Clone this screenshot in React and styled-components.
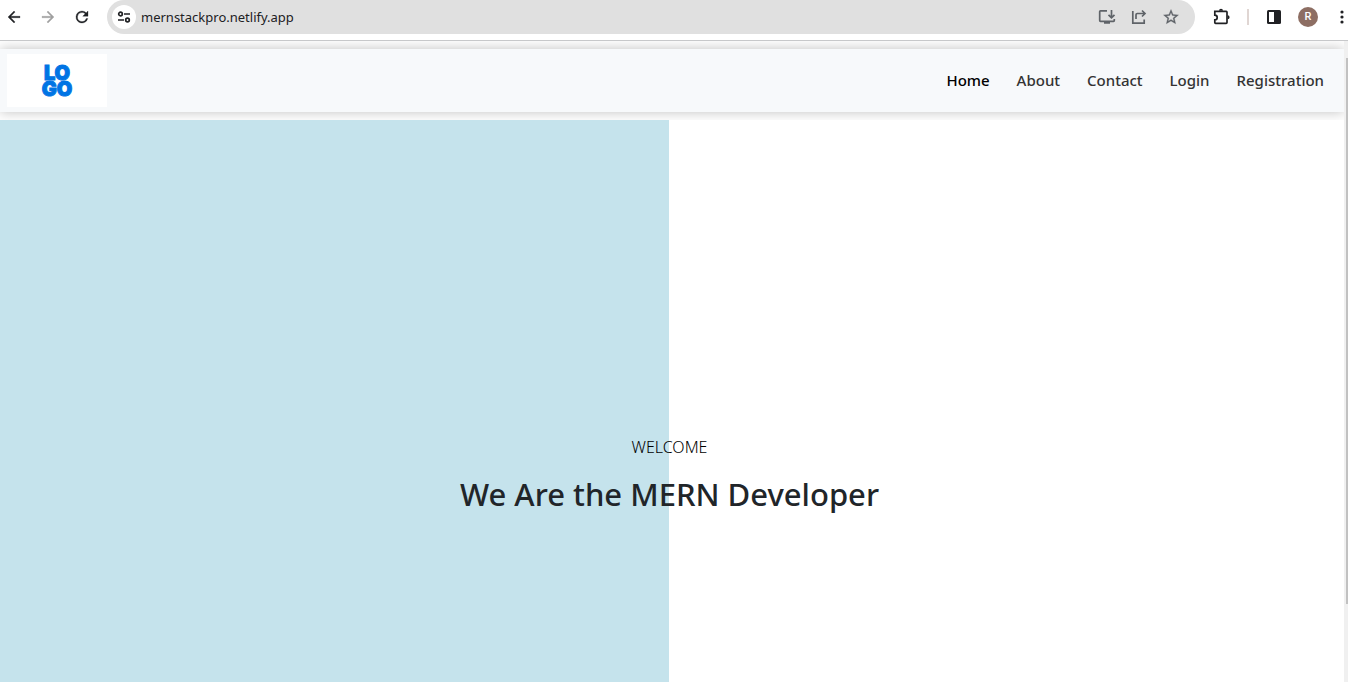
import React from "react";
import styled, { createGlobalStyle } from "styled-components";

const GlobalStyle = createGlobalStyle`
  * { box-sizing: border-box; }
  body {
    margin: 0;
    background: #ffffff;
    color: #212529;
    font-family: "Noto Sans", "Open Sans", sans-serif;
    overflow: hidden;
  }
`;

const Window = styled.div`
  display: flex;
  flex-direction: column;
  min-height: 100vh;
`;

const Toolbar = styled.div`
  display: flex;
  align-items: center;
  padding: 0 0 6px 4px;
  border-bottom: 1px solid #c7c8ca;
  background: #ffffff;
`;

const IconButton = styled.button`
  display: flex;
  align-items: center;
  justify-content: center;
  flex: none;
  width: 20px;
  height: 20px;
  padding: 0;
  border: 0;
  background: none;
  color: ${(p) => p.$color || "#202124"};
`;

const History = styled.div`
  display: flex;
  gap: 14px;
  margin-right: 15px;
`;

const AddressBar = styled.form`
  display: flex;
  align-items: center;
  flex: 1;
  min-width: 0;
  height: 34px;
  padding: 0 14px 0 5px;
  border-radius: 17px;
  background: #e0e0e0;
`;

const SiteInfo = styled(IconButton)`
  width: 24px;
  height: 24px;
  border-radius: 50%;
  background: #ffffff;
`;

const UrlInput = styled.input`
  flex: 1;
  min-width: 0;
  height: 24px;
  margin-left: 5px;
  padding: 0;
  border: 0;
  outline: 0;
  background: transparent;
  color: #202124;
  font-family: "Noto Sans", "Open Sans", sans-serif;
  font-size: 13px;
`;

const PageActions = styled.div`
  display: flex;
  gap: 12px;
`;

const BrowserActions = styled.div`
  display: flex;
  align-items: center;
  margin-left: 16px;
`;

const Divider = styled.span`
  width: 2px;
  height: 16px;
  margin: 0 15px 0 16px;
  background: #e0d6d3;
`;

const Avatar = styled.button`
  width: 20px;
  height: 20px;
  margin: 0 16px 0 14px;
  padding: 0;
  border: 0;
  border-radius: 50%;
  background: #8d6e63;
  color: #ffffff;
  font-family: Roboto, sans-serif;
  font-size: 11px;
  font-weight: 500;
  line-height: 20px;
  text-align: center;
`;

const MenuButton = styled(IconButton)`
  width: 16px;
  margin-right: -2px;
`;

const Viewport = styled.div`
  display: flex;
  flex: 1;
`;

const Page = styled.div`
  flex: 1;
  display: flex;
  flex-direction: column;
  overflow: hidden;
`;

const Navbar = styled.nav`
  display: flex;
  align-items: center;
  justify-content: space-between;
  margin: 8px 0;
  padding: 5px 20px 5px 7px;
  background: #f7f9fb;
  box-shadow: 0 0 12px rgba(0, 0, 0, 0.25);
`;

const Logo = styled.a`
  display: flex;
  flex-direction: column;
  align-items: center;
  justify-content: center;
  width: 100px;
  height: 53px;
  background: #ffffff;
  color: #0074e4;
  font-family: Inter, sans-serif;
  font-size: 20px;
  font-weight: 900;
  line-height: 16px;
  text-decoration: none;
  -webkit-text-stroke: 1px #0074e4;
`;

const NavList = styled.ul`
  display: flex;
  gap: 27px;
  margin: 0;
  padding: 0 0 2px;
  list-style: none;
`;

const NavLink = styled.a`
  color: ${(p) => (p.$active ? "#000000" : "#333333")};
  font-size: 15px;
  font-weight: 500;
  line-height: 24px;
  text-decoration: none;
`;

const Hero = styled.main`
  flex: 1;
  padding: 315px 5px 0 0;
  background: linear-gradient(to right, #c5e3ec calc(50% - 3px), #ffffff calc(50% - 3px));
  text-align: center;
`;

const Welcome = styled.p`
  margin: 0 0 15px;
  color: #000000;
  font-size: 16px;
  font-weight: 300;
  line-height: 24px;
`;

const Title = styled.h1`
  margin: 0;
  font-size: 31px;
  font-weight: 500;
  line-height: 40px;
`;

const ScrollTrack = styled.div`
  width: 4px;
  padding: 17px 0 78px 2px;
  background: #f0f0f0;
`;

const ScrollThumb = styled.div`
  height: 100%;
  background: #c1c1c1;
`;

const Material = ({ d }) => (
  <svg width="18" height="18" viewBox="0 0 24 24" fill="currentColor" stroke="currentColor" strokeWidth="0.4" aria-hidden="true">
    <path d={d} />
  </svg>
);

const Line = ({ children }) => (
  <svg width="20" height="20" viewBox="0 0 20 20" fill="none" stroke="currentColor" strokeWidth="1.7" aria-hidden="true">
    {children}
  </svg>
);

const links = ["Home", "About", "Contact", "Login", "Registration"];

export default function App() {
  return (
    <Window>
      <GlobalStyle />
      <Toolbar>
        <History>
          <IconButton aria-label="Back">
            <Material d="M20 11H7.83l5.59-5.59L12 4l-8 8 8 8 1.41-1.41L7.83 13H20v-2z" />
          </IconButton>
          <IconButton aria-label="Forward" $color="#a0a0a0">
            <Material d="M12 4l-1.41 1.41L16.17 11H4v2h12.17l-5.58 5.59L12 20l8-8z" />
          </IconButton>
          <IconButton aria-label="Reload">
            <Material d="M17.65 6.35A7.96 7.96 0 0 0 12 4a8 8 0 1 0 7.73 10h-2.08A6 6 0 1 1 12 6c1.66 0 3.14.69 4.22 1.78L13 11h7V4l-2.35 2.35z" />
          </IconButton>
        </History>
        <AddressBar onSubmit={(e) => e.preventDefault()}>
          <SiteInfo type="button" aria-label="Site information">
            <Line>
              <circle cx="6.5" cy="7" r="1.8" />
              <path d="M10 7h6M4 13h6" />
              <circle cx="13.5" cy="13" r="1.8" />
            </Line>
          </SiteInfo>
          <UrlInput aria-label="Address" defaultValue="mernstackpro.netlify.app" />
          <PageActions>
            <IconButton type="button" aria-label="Install app" $color="#5f6368">
              <Line>
                <path d="M10 3.8H3.5q-.8 0-.8.8v9q0 .8.8.8h13q.8 0 .8-.8V12M7 16h6" />
                <path d="M14.5 3v7.5M11.5 7.8l3 3 3-3" />
              </Line>
            </IconButton>
            <IconButton type="button" aria-label="Share" $color="#5f6368">
              <Line>
                <path d="M3.8 4v12.2H15.2V12.5" />
                <path d="M7 12V7.8q0-1.3 1.3-1.3H16M13 3.5l3 3-3 3" />
              </Line>
            </IconButton>
            <IconButton type="button" aria-label="Bookmark" $color="#5f6368">
              <Material d="M22 9.24l-7.19-.62L12 2 9.19 8.63 2 9.24l5.46 4.73L5.82 21 12 17.27 18.18 21l-1.63-7.03L22 9.24zM12 15.4l-3.76 2.27 1-4.28-3.32-2.88 4.38-.38L12 6.1l1.71 4.04 4.38.38-3.32 2.88 1 4.28L12 15.4z" />
            </IconButton>
          </PageActions>
        </AddressBar>
        <BrowserActions>
          <IconButton aria-label="Extensions">
            <Line>
              <path d="M4 4.4H15.2q.8 0 .8.8V15.6q0 .8-.8.8H4.6q-.8 0-.8-.8v-2.7a2.4 2.4 0 0 0 0-4.8V4.4z" />
              <path d="M8 3.8a2 2 0 0 1 4 0zM16.6 8.2a2 2 0 0 1 0 4z" fill="currentColor" stroke="none" />
            </Line>
          </IconButton>
          <Divider />
          <IconButton aria-label="Side panel">
            <svg width="14" height="14" viewBox="0 0 14 14" aria-hidden="true">
              <rect width="14" height="14" rx="1.5" fill="currentColor" />
              <rect x="2" y="2" width="5" height="10" fill="#ffffff" />
            </svg>
          </IconButton>
          <Avatar aria-label="Profile">R</Avatar>
          <MenuButton aria-label="Menu">
            <svg width="4" height="14" viewBox="0 0 4 14" fill="currentColor" aria-hidden="true">
              <circle cx="2" cy="2" r="1.6" />
              <circle cx="2" cy="7" r="1.6" />
              <circle cx="2" cy="12" r="1.6" />
            </svg>
          </MenuButton>
        </BrowserActions>
      </Toolbar>
      <Viewport>
        <Page>
          <Navbar>
            <Logo href="#home">
              <span>LO</span>
              <span>GO</span>
            </Logo>
            <NavList>
              {links.map((label, i) => (
                <li key={label}>
                  <NavLink href={`#${label.toLowerCase()}`} $active={i === 0}>
                    {label}
                  </NavLink>
                </li>
              ))}
            </NavList>
          </Navbar>
          <Hero>
            <Welcome>WELCOME</Welcome>
            <Title>We Are the MERN Developer</Title>
          </Hero>
        </Page>
        <ScrollTrack>
          <ScrollThumb />
        </ScrollTrack>
      </Viewport>
    </Window>
  );
}
